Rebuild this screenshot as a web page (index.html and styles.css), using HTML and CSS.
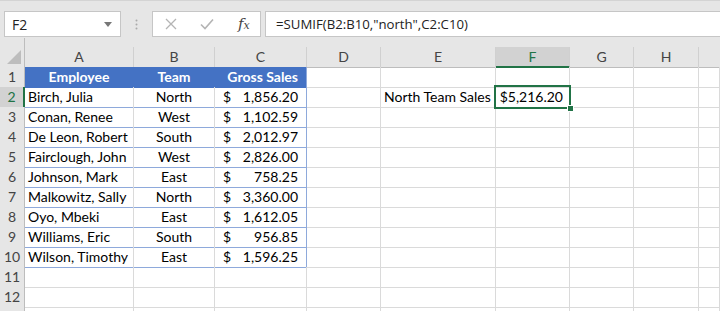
FILE: index.html
```html
<!DOCTYPE html>
<html>
<head>
<meta charset="utf-8">
<link rel="stylesheet" href="styles.css">
</head>
<body>
<div class="toolbar">
  <div class="namebox">
    <span class="name">F2</span>
    <svg class="dd" width="8" height="5" viewBox="0 0 8 5"><path d="M0 0h8L4 5z" fill="#777"/></svg>
  </div>
  <div class="grip">
    <svg width="3" height="11" viewBox="0 0 3 11"><circle cx="1.5" cy="1.5" r="1" fill="#aaa"/><circle cx="1.5" cy="5.5" r="1" fill="#aaa"/><circle cx="1.5" cy="9.5" r="1" fill="#aaa"/></svg>
  </div>
  <div class="fxbtns">
    <svg class="ic" width="12" height="12" viewBox="0 0 12 12"><path d="M1 1L11 11M11 1L1 11" stroke="#b4b4b4" stroke-width="1.3"/></svg>
    <svg class="ic" width="14" height="12" viewBox="0 0 14 12"><path d="M1 6.5L5 10.5L13 1.5" stroke="#b4b4b4" stroke-width="1.6" fill="none"/></svg>
    <span class="fx">f<span class="fxx">x</span></span>
  </div>
  <div class="formula">=SUMIF(B2:B10,"north",C2:C10)</div>
</div>

<div class="sheet">
  <div class="row hdr">
    <div class="rh corner"><svg width="14" height="14" viewBox="0 0 14 14"><path d="M14 0V14H0z" fill="#bdbdbd"/></svg></div>
    <div class="ch">A</div><div class="ch">B</div><div class="ch">C</div><div class="ch">D</div><div class="ch">E</div><div class="ch sel">F</div><div class="ch">G</div><div class="ch">H</div><div class="ch last"></div>
  </div>

  <div class="row">
    <div class="rh">1</div>
    <div class="c th ctr">Employee</div><div class="c th ctr">Team</div><div class="c th rt tl">Gross Sales</div>
    <div class="c"></div><div class="c"></div><div class="c"></div><div class="c"></div><div class="c"></div><div class="c"></div>
  </div>

  <div class="row">
    <div class="rh rsel">2</div>
    <div class="c t">Birch, Julia</div><div class="c t ctr">North</div><div class="c t tl acc"><span>$</span><span>1,856.20</span></div>
    <div class="c"></div><div class="c">North Team Sales</div>
    <div class="c active rt">$5,216.20<div class="selbox"><div class="handle"></div></div></div>
    <div class="c"></div><div class="c"></div><div class="c"></div>
  </div>

  <div class="row">
    <div class="rh">3</div>
    <div class="c t">Conan, Renee</div><div class="c t ctr">West</div><div class="c t tl acc"><span>$</span><span>1,102.59</span></div>
    <div class="c"></div><div class="c"></div><div class="c"></div><div class="c"></div><div class="c"></div><div class="c"></div>
  </div>

  <div class="row">
    <div class="rh">4</div>
    <div class="c t">De Leon, Robert</div><div class="c t ctr">South</div><div class="c t tl acc"><span>$</span><span>2,012.97</span></div>
    <div class="c"></div><div class="c"></div><div class="c"></div><div class="c"></div><div class="c"></div><div class="c"></div>
  </div>

  <div class="row">
    <div class="rh">5</div>
    <div class="c t">Fairclough, John</div><div class="c t ctr">West</div><div class="c t tl acc"><span>$</span><span>2,826.00</span></div>
    <div class="c"></div><div class="c"></div><div class="c"></div><div class="c"></div><div class="c"></div><div class="c"></div>
  </div>

  <div class="row">
    <div class="rh">6</div>
    <div class="c t">Johnson, Mark</div><div class="c t ctr">East</div><div class="c t tl acc"><span>$</span><span>758.25</span></div>
    <div class="c"></div><div class="c"></div><div class="c"></div><div class="c"></div><div class="c"></div><div class="c"></div>
  </div>

  <div class="row">
    <div class="rh">7</div>
    <div class="c t">Malkowitz, Sally</div><div class="c t ctr">North</div><div class="c t tl acc"><span>$</span><span>3,360.00</span></div>
    <div class="c"></div><div class="c"></div><div class="c"></div><div class="c"></div><div class="c"></div><div class="c"></div>
  </div>

  <div class="row">
    <div class="rh">8</div>
    <div class="c t">Oyo, Mbeki</div><div class="c t ctr">East</div><div class="c t tl acc"><span>$</span><span>1,612.05</span></div>
    <div class="c"></div><div class="c"></div><div class="c"></div><div class="c"></div><div class="c"></div><div class="c"></div>
  </div>

  <div class="row">
    <div class="rh">9</div>
    <div class="c t">Williams, Eric</div><div class="c t ctr">South</div><div class="c t tl acc"><span>$</span><span>956.85</span></div>
    <div class="c"></div><div class="c"></div><div class="c"></div><div class="c"></div><div class="c"></div><div class="c"></div>
  </div>

  <div class="row">
    <div class="rh">10</div>
    <div class="c t">Wilson, Timothy</div><div class="c t ctr">East</div><div class="c t tl acc"><span>$</span><span>1,596.25</span></div>
    <div class="c"></div><div class="c"></div><div class="c"></div><div class="c"></div><div class="c"></div><div class="c"></div>
  </div>

  <div class="row">
    <div class="rh">11</div>
    <div class="c"></div><div class="c"></div><div class="c"></div><div class="c"></div><div class="c"></div><div class="c"></div><div class="c"></div><div class="c"></div><div class="c"></div>
  </div>

  <div class="row">
    <div class="rh">12</div>
    <div class="c"></div><div class="c"></div><div class="c"></div><div class="c"></div><div class="c"></div><div class="c"></div><div class="c"></div><div class="c"></div><div class="c"></div>
  </div>

  <div class="row">
    <div class="rh"></div>
    <div class="c"></div><div class="c"></div><div class="c"></div><div class="c"></div><div class="c"></div><div class="c"></div><div class="c"></div><div class="c"></div><div class="c"></div>
  </div>
</div>
</body>
</html>
```

FILE: styles.css
```css
* { box-sizing: border-box; }
html, body { margin: 0; padding: 0; }
body {
  width: 720px;
  height: 311px;
  overflow: hidden;
  background: #fff;
  font-family: Lato, "Liberation Sans", sans-serif;
  font-size: 14px;
  color: #000;
}

.toolbar {
  height: 38px;
  background: #e6e6e6;
  border-top: 1px solid #d4d4d4;
  display: flex;
  align-items: flex-start;
  padding: 10px 0 0 4px;
}
.namebox {
  width: 117px;
  height: 26px;
  background: #fff;
  border: 1px solid #c6c6c6;
  display: flex;
  align-items: center;
  justify-content: space-between;
  padding: 0 8px 0 7px;
  font-family: "Open Sans", sans-serif;
  font-size: 14px;
  color: #222;
}
.dd { margin-top: 1px; }
.grip {
  width: 31px;
  height: 26px;
  display: flex;
  align-items: center;
  justify-content: center;
  padding-right: 1px;
}
.fxbtns {
  width: 109px;
  height: 26px;
  background: #fff;
  border: 1px solid #c6c6c6;
  display: flex;
  align-items: center;
  padding-left: 12px;
  gap: 23px;
}
.fx {
  font-family: "DejaVu Serif", "Liberation Serif", serif;
  font-style: italic;
  font-size: 15px;
  color: #444;
  margin-left: 1px;
}
.fxx { font-size: 11px; }
.formula {
  flex: 1;
  height: 26px;
  margin-left: 4px;
  margin-right: -4px;
  background: #fff;
  border: 1px solid #c6c6c6;
  font-family: "Open Sans", sans-serif;
  font-size: 13.2px;
  line-height: 24px;
  padding-left: 10px;
  color: #222;
}

.sheet { position: relative; }
.row {
  display: grid;
  grid-template-columns: 25px 109px 81px 92px 74px 115px 74px 64px 65px 1fr;
  height: 20px;
}
.row.hdr {
  height: 29px;
  padding-top: 9px;
  background: #e6e6e6;
}
.rh {
  background: #e6e6e6;
  border-right: 1px solid #bdbdbd;
  border-bottom: 1px solid #d2d2d2;
  color: #444;
  text-align: center;
  line-height: 20px;
  font-size: 14px;
}
.rh.corner {
  margin-top: -9px;
  border-bottom: 1px solid #bdbdbd;
  display: flex;
  align-items: flex-end;
  justify-content: flex-end;
  padding: 0 3px 3px 0;
}
.rh.rsel {
  background: #d2d2d2;
  border-right: 2px solid #217346;
  color: #217346;
}
.ch {
  border-right: 1px solid #d0d0d0;
  border-bottom: 1px solid #bdbdbd;
  color: #444;
  text-align: center;
  line-height: 19px;
  font-size: 14px;
}
.ch.sel {
  background: #d2d2d2;
  border-bottom: 2px solid #217346;
  color: #217346;
}
.ch.last { border-right: 0; }

.c {
  border-right: 1px solid #dadada;
  border-bottom: 1px solid #dadada;
  line-height: 20px;
  padding: 0 3px 0 3px;
  white-space: nowrap;
}
.t { border-bottom-color: #8ea9db; }
.tl { border-right-color: #8ea9db; }
.th {
  background: #4472c4;
  color: #fff;
  font-weight: 700;
  border-bottom-color: #4472c4;
}
.th.ctr { border-right-color: #4472c4; }
.ctr { text-align: center; }
.rt { text-align: right; padding-right: 8px; }
.acc {
  display: flex;
  justify-content: space-between;
  padding: 0 8px 0 8px;
}
.active {
  position: relative;
  padding-right: 6px;
}
.selbox {
  position: absolute;
  top: -2px;
  left: -2px;
  right: -2px;
  bottom: -2px;
  border: 2px solid #217346;
}
.handle {
  position: absolute;
  right: -5px;
  bottom: -5px;
  width: 7px;
  height: 7px;
  background: #217346;
  border: 1px solid #fff;
}
```
